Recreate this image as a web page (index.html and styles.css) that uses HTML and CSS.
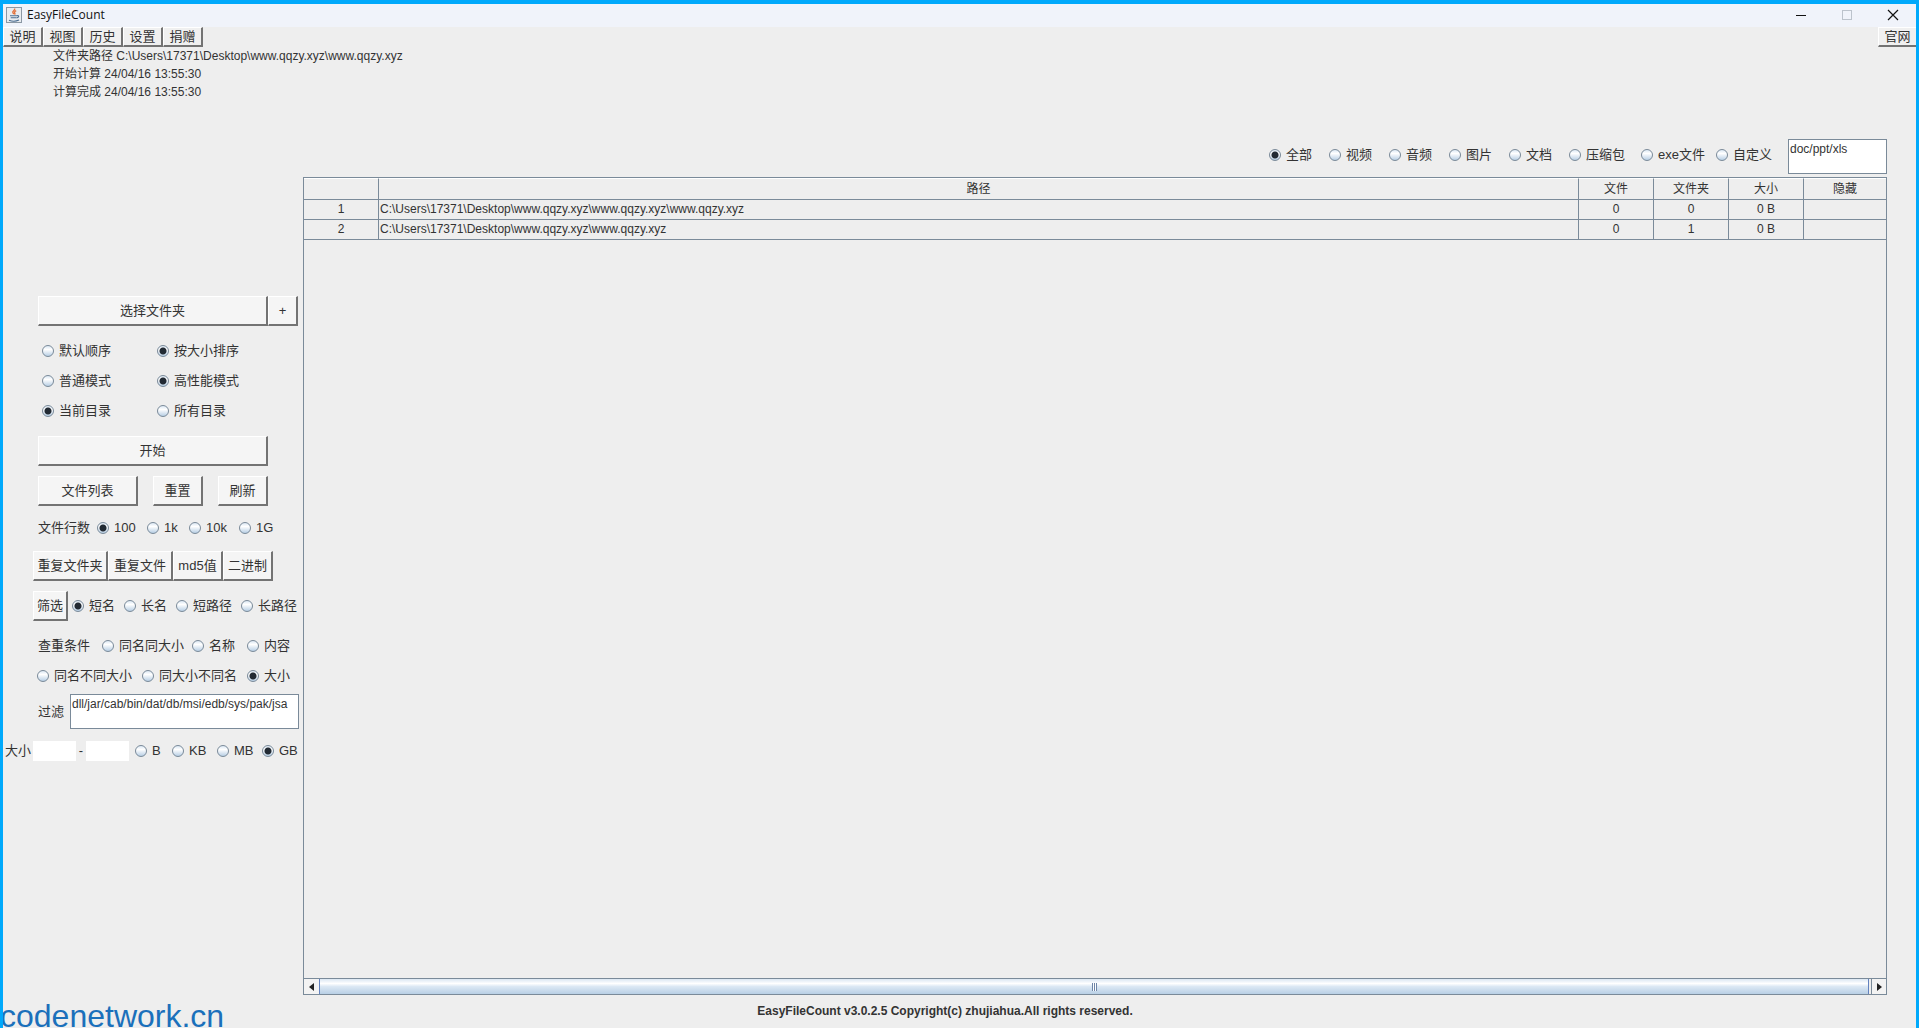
FILE: index.html
```html
<!DOCTYPE html>
<html lang="zh-CN">
<head>
<meta charset="utf-8">
<title>EasyFileCount</title>
<link rel="stylesheet" href="styles.css">
</head>
<body>
<div class="window">
  <header class="titlebar">
    <svg class="app-icon" width="16" height="16" viewBox="0 0 16 16" aria-hidden="true">
      <rect x=".5" y=".5" width="15" height="15" fill="#e9ecef" stroke="#8c98a4"/>
      <path d="M8.600 1.500c1 1.800-2.600 2.400-1.800 4 .3.700.9 1 1 1.700M10.200 3.600C8.800 4.400 8 5 8.800 6.200c.4.600.2 1-.2 1.400" fill="none" stroke="#e2713a" stroke-width="1.300"/>
      <path d="M4 8.700h7M4.700 10.700h5.600M3 13.200c3 1.200 7 1.200 10-.2M11 8.700c2.400-.6 2.200 1.600-.4 2.200" fill="none" stroke="#4c6f93" stroke-width="1.100"/>
    </svg>
    <h1 class="title">EasyFileCount</h1>
    <div class="controls">
      <button class="ctl" type="button" aria-label="最小化"><svg width="12" height="12" viewBox="0 0 12 12"><path d="M1 6.500h10" stroke="#111" stroke-width="1"/></svg></button>
      <button class="ctl" type="button" aria-label="最大化" disabled><svg width="12" height="12" viewBox="0 0 12 12"><rect x="1.500" y="1.500" width="9" height="9" fill="none" stroke="#bcc3cc"/></svg></button>
      <button class="ctl" type="button" aria-label="关闭"><svg width="12" height="12" viewBox="0 0 12 12"><path d="M1 1l10 10M11 1L1 11" stroke="#111" stroke-width="1.200"/></svg></button>
    </div>
  </header>

  <nav class="menubar">
    <button class="menu" type="button">说明</button>
    <button class="menu" type="button">视图</button>
    <button class="menu" type="button">历史</button>
    <button class="menu" type="button">设置</button>
    <button class="menu" type="button">捐赠</button>
    <button class="menu site" type="button">官网</button>
  </nav>

  <div class="log">
    <p>文件夹路径 C:\Users\17371\Desktop\www.qqzy.xyz\www.qqzy.xyz</p>
    <p>开始计算 24/04/16 13:55:30</p>
    <p>计算完成 24/04/16 13:55:30</p>
  </div>

  <div class="main">
    <form class="side">
      <div class="row buttons">
        <button class="btn grow" type="button">选择文件夹</button><button class="btn plus" type="button">+</button>
      </div>
      <div class="modes">
        <label class="radio"><input type="radio" name="order">默认顺序</label>
        <label class="radio"><input type="radio" name="order" checked>按大小排序</label>
        <label class="radio"><input type="radio" name="perf">普通模式</label>
        <label class="radio"><input type="radio" name="perf" checked>高性能模式</label>
        <label class="radio"><input type="radio" name="scope" checked>当前目录</label>
        <label class="radio"><input type="radio" name="scope">所有目录</label>
      </div>
      <div class="row start">
        <button class="btn grow" type="button">开始</button>
      </div>
      <div class="row actions">
        <button class="btn grow" type="button">文件列表</button>
        <button class="btn small" type="button">重置</button>
        <button class="btn small" type="button">刷新</button>
      </div>
      <div class="line lines">
        <span>文件行数</span>
        <label class="radio"><input type="radio" name="lines" checked>100</label>
        <label class="radio"><input type="radio" name="lines">1k</label>
        <label class="radio"><input type="radio" name="lines">10k</label>
        <label class="radio"><input type="radio" name="lines">1G</label>
      </div>
      <div class="tools">
        <button class="btn" type="button">重复文件夹</button>
        <button class="btn" type="button">重复文件</button>
        <button class="btn" type="button">md5值</button>
        <button class="btn" type="button">二进制</button>
      </div>
      <div class="line names">
        <button class="btn" type="button">筛选</button>
        <label class="radio"><input type="radio" name="naming" checked>短名</label>
        <label class="radio"><input type="radio" name="naming">长名</label>
        <label class="radio"><input type="radio" name="naming">短路径</label>
        <label class="radio"><input type="radio" name="naming">长路径</label>
      </div>
      <div class="line dup">
        <span>查重条件</span>
        <label class="radio"><input type="radio" name="dup">同名同大小</label>
        <label class="radio"><input type="radio" name="dup">名称</label>
        <label class="radio"><input type="radio" name="dup">内容</label>
      </div>
      <div class="line dup-more">
        <label class="radio"><input type="radio" name="dup">同名不同大小</label>
        <label class="radio"><input type="radio" name="dup">同大小不同名</label>
        <label class="radio"><input type="radio" name="dup" checked>大小</label>
      </div>
      <div class="filter">
        <label for="filter">过滤</label>
        <textarea class="area" id="filter">dll/jar/cab/bin/dat/db/msi/edb/sys/pak/jsa</textarea>
      </div>
      <div class="line size">
        <label for="min">大小</label>
        <input class="num" id="min" type="text">
        <span class="dash">-</span>
        <input class="num" type="text" aria-label="最大">
        <label class="radio first"><input type="radio" name="unit">B</label>
        <label class="radio"><input type="radio" name="unit">KB</label>
        <label class="radio"><input type="radio" name="unit">MB</label>
        <label class="radio"><input type="radio" name="unit" checked>GB</label>
      </div>
    </form>

    <section class="results">
      <div class="types">
        <label class="radio"><input type="radio" name="type" checked>全部</label>
        <label class="radio"><input type="radio" name="type">视频</label>
        <label class="radio"><input type="radio" name="type">音频</label>
        <label class="radio"><input type="radio" name="type">图片</label>
        <label class="radio"><input type="radio" name="type">文档</label>
        <label class="radio"><input type="radio" name="type">压缩包</label>
        <label class="radio"><input type="radio" name="type">exe文件</label>
        <label class="radio"><input type="radio" name="type">自定义</label>
        <textarea class="area" aria-label="自定义类型">doc/ppt/xls</textarea>
      </div>
      <div class="grid">
        <table>
          <colgroup><col class="c-num"><col><col class="c-num"><col class="c-num"><col class="c-num"><col class="c-last"></colgroup>
          <thead>
            <tr><th></th><th>路径</th><th>文件</th><th>文件夹</th><th>大小</th><th>隐藏</th></tr>
          </thead>
          <tbody>
            <tr><td>1</td><td class="path">C:\Users\17371\Desktop\www.qqzy.xyz\www.qqzy.xyz\www.qqzy.xyz</td><td>0</td><td>0</td><td>0 B</td><td></td></tr>
            <tr><td>2</td><td class="path">C:\Users\17371\Desktop\www.qqzy.xyz\www.qqzy.xyz</td><td>0</td><td>1</td><td>0 B</td><td></td></tr>
          </tbody>
        </table>
        <div class="scroll">
          <button class="arrow left" type="button" aria-label="向左滚动"><svg width="5" height="8" viewBox="0 0 5 8"><path d="M5 0v8L0 4z" fill="#222"/></svg></button>
          <div class="thumb"><span class="grip"></span></div>
          <button class="arrow right" type="button" aria-label="向右滚动"><svg width="5" height="8" viewBox="0 0 5 8"><path d="M0 0v8l5-4z" fill="#222"/></svg></button>
        </div>
      </div>
    </section>
  </div>

  <footer class="copyright">EasyFileCount v3.0.2.5 Copyright(c) zhujiahua.All rights reserved.</footer>
  <div class="watermark">codenetwork.cn</div>
</div>
</body>
</html>
```
FILE: styles.css
```css
* {
  box-sizing: border-box;
}

body {
  margin: 0;
  color: #333;
  font: 13px/20px "Liberation Sans", "Noto Sans CJK SC", sans-serif;
}

button,
input,
textarea {
  margin: 0;
  color: inherit;
  font: inherit;
}

.window {
  position: relative;
  display: flex;
  flex-direction: column;
  min-height: 100vh;
  overflow: hidden;
  border: 3px solid #00a9fb;
  border-top-width: 4px;
  border-bottom: 0;
  background: #eee;
}

.titlebar {
  display: flex;
  align-items: center;
  height: 23px;
  padding: 0 0 2px 3px;
  background: #f0f3fa;
}

.title {
  margin: 0 0 0 5px;
  color: #111;
  font: 12px/20px "Open Sans", sans-serif;
}

.controls {
  display: flex;
  margin-left: auto;
}

.ctl {
  display: grid;
  place-items: center;
  width: 46px;
  height: 20px;
  padding: 0;
  border: 0;
  background: none;
}

.menubar {
  display: flex;
}

.menu,
.btn {
  padding: 0;
  border: 1px solid #fff;
  border-right: 2px solid #737373;
  border-bottom: 2px solid #737373;
  background: #f5f5f5;
  white-space: nowrap;
}

.menu {
  width: 40px;
  height: 20px;
  background: #f0f0f0;
  line-height: 16px;
}

.site {
  width: 38px;
  margin-left: auto;
  border-right: 0;
}

.log {
  height: 92px;
  padding-left: 50px;
  font-size: 12px;
  line-height: 18px;
}

.log p {
  margin: 0;
}

.main {
  display: flex;
  flex: 1;
  padding-right: 29px;
}

.side {
  width: 300px;
  flex: none;
  padding-top: 157px;
}

.btn {
  height: 30px;
}

.row {
  display: flex;
  padding: 0 35px;
}

.row.buttons {
  padding-right: 5px;
}

.grow {
  flex: 1;
}

.plus {
  width: 30px;
}

.radio {
  display: flex;
  align-items: center;
  gap: 5px;
  white-space: nowrap;
}

.radio input {
  appearance: none;
  flex: none;
  width: 12px;
  height: 12px;
  border: 1px solid #7a8a99;
  border-radius: 50%;
  background: linear-gradient(#dce8f4, #fff 35%, #b8cfe5);
}

.radio input:checked {
  background: radial-gradient(circle, #222a33 3px, transparent 4px), linear-gradient(#dce8f4, #fff 35%, #b8cfe5);
}

.modes {
  display: grid;
  grid-template-columns: 115px auto;
  grid-auto-rows: 30px;
  padding: 10px 0 10px 39px;
}

.actions {
  gap: 15px;
  padding-top: 10px;
}

.small {
  width: 50px;
}

.line {
  display: grid;
  align-items: center;
  height: 30px;
  white-space: nowrap;
}

.lines {
  grid-template-columns: 59px 50px 42px 50px auto;
  margin: 7px 0 8px;
  padding-left: 35px;
}

.tools {
  display: grid;
  grid-template-columns: 75px 65px 50px 50px;
  padding-left: 30px;
}

.names {
  grid-template-columns: 39px 52px 52px 65px auto;
  margin: 10px 0;
  padding-left: 30px;
}

.names .btn {
  width: 35px;
}

.dup {
  grid-template-columns: 64px 90px 55px auto;
  padding-left: 35px;
}

.dup-more {
  grid-template-columns: 105px 105px auto;
  padding-left: 34px;
}

.area {
  display: block;
  height: 35px;
  padding: 0 1px;
  overflow: hidden;
  border: 1px solid #7a8a99;
  background: #fff;
  font-size: 12px;
  line-height: 18px;
  resize: none;
}

.filter {
  display: flex;
  align-items: center;
  gap: 6px;
  margin-top: 3px;
  padding: 0 4px 0 35px;
}

.filter .area {
  flex: 1;
  min-width: 0;
}

.size {
  grid-template-columns: 28px 43px 10px 43px 43px 45px 45px auto;
  margin-top: 7px;
  padding-left: 2px;
}

.num {
  width: 43px;
  height: 20px;
  padding: 0 2px;
  border: 0;
  background: #fff;
}

.dash {
  text-align: center;
}

.size .first {
  padding-left: 6px;
}

.results {
  display: flex;
  flex: 1;
  flex-direction: column;
  min-width: 0;
}

.types {
  display: grid;
  grid-template-columns: repeat(5, 60px) 72px 75px 72px 99px;
  justify-content: end;
  align-items: start;
  margin-bottom: 3px;
}

.types .radio {
  height: 32px;
}

.grid {
  display: flex;
  flex: 1;
  flex-direction: column;
  justify-content: space-between;
  border: 1px solid #7a8a99;
}

table {
  width: 100%;
  border-collapse: separate;
  border-spacing: 0;
  table-layout: fixed;
  font-size: 12px;
  line-height: 19px;
}

.c-num {
  width: 75px;
}

.c-last {
  width: 82px;
}

th,
td {
  height: 20px;
  padding: 0;
  border-right: 1px solid #7a8a99;
  border-bottom: 1px solid #7a8a99;
  font-weight: normal;
  text-align: center;
}

th {
  height: 22px;
  padding-top: 1px;
  border-top: 1px solid #fff;
}

th:last-child,
td:last-child {
  border-right: 0;
}

.path {
  padding-left: 1px;
  text-align: left;
}

.scroll {
  display: flex;
  height: 16px;
  border-top: 1px solid #7a8a99;
}

.arrow {
  display: grid;
  place-items: center;
  width: 15px;
  padding: 0;
  border: 0;
  background: #f3f3f3;
}

.arrow.right {
  border-left: 1px solid #7a8a99;
}

.thumb {
  display: grid;
  flex: 1;
  place-items: center;
  margin-right: 2px;
  border: 1px solid #6382bf;
  border-width: 0 1px;
  background: linear-gradient(#dbe7f3, #fff 30%, #dce8f4 50%, #b8cfe5);
}

.grip {
  width: 5px;
  height: 8px;
  background: repeating-linear-gradient(90deg, #6f86a8 0 1px, #fff 1px 2px);
}

.copyright {
  padding: 6px 29px 7px 0;
  font-size: 12px;
  font-weight: bold;
  text-align: center;
}

.watermark {
  position: absolute;
  bottom: -4px;
  left: -3px;
  color: #1b70bb;
  font-size: 32px;
  line-height: 32px;
}
```
